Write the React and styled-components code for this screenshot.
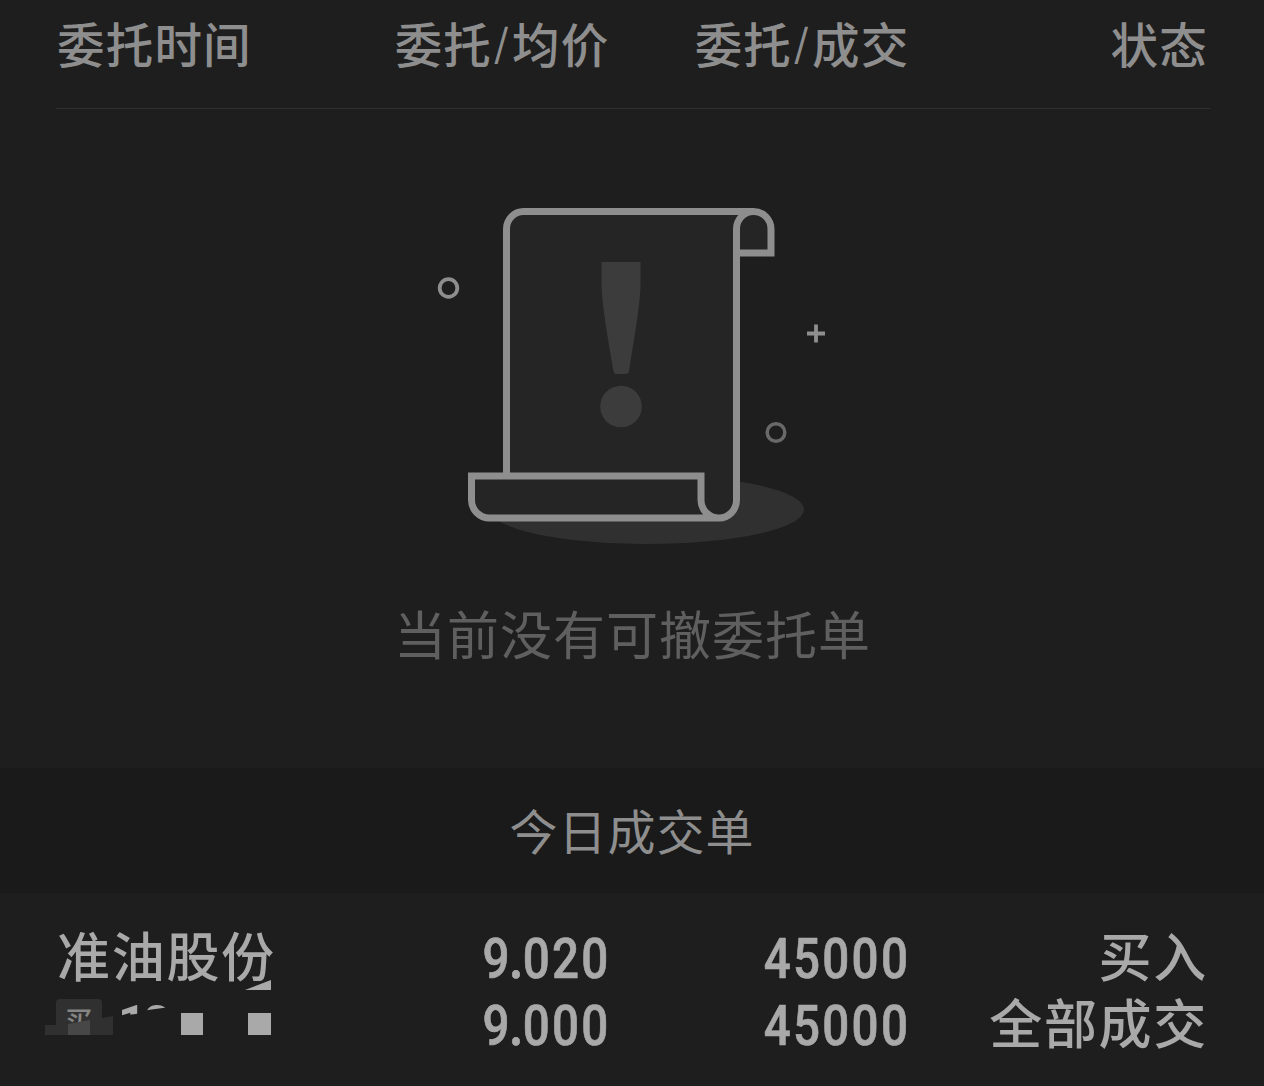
import styled, { createGlobalStyle } from 'styled-components'

const GlobalStyle = createGlobalStyle`
    * {
        box-sizing: border-box;
    }
    body {
        margin: 0;
        background: #1e1e1e;
        font-family: "Noto Sans CJK SC", sans-serif;
    }
`

const Page = styled.main`
    width: 1264px;
    height: 1086px;
    display: flex;
    flex-direction: column;
    background: #1e1e1e;
    overflow: hidden;
`

const Columns = styled.div`
    display: grid;
    grid-template-columns: 252px 300px 300px 300px;
`

const TableHead = styled(Columns)`
    height: 109px;
    margin: 0 54px 0 56px;
    border-bottom: 1px solid #303030;
    color: #8e8e8e;
    font-size: 47.5px;
    font-weight: 500;
    line-height: 86px;
    letter-spacing: 1.2px;
`

const Cell = styled.div`
    white-space: nowrap;
    text-align: ${props => props.$align || 'right'};
    padding-left: ${props => (props.$align ? '1px' : '0')};
    margin-right: ${props => props.$shift || '-1.5px'};
`

const Slash = styled.span`
    padding: 0 2px;
    font-size: 38px;
    line-height: 0;
    vertical-align: 6px;
`

const Empty = styled.section`
    height: 659px;
    padding-top: 81px;
    display: flex;
    flex-direction: column;
    align-items: center;

    svg {
        display: block;
        flex: none;
        margin-left: 6px;
    }

    p {
        margin: 33px 0 0 1px;
        color: #5f5f5f;
        font-size: 52px;
        font-weight: 400;
        line-height: 79px;
        letter-spacing: 1px;
    }
`

const SectionTitle = styled.h2`
    height: 125px;
    margin: 0;
    background: #1a1a1a;
    color: #8e8e8e;
    font-size: 48px;
    font-weight: 400;
    line-height: 123px;
    letter-spacing: 1px;
    text-align: center;
`

const DealRow = styled(Columns)`
    height: 193px;
    padding: 28px 56px 0;
    color: #a9a9a9;
    font-size: 53px;
    font-weight: 500;
    line-height: 67px;
    letter-spacing: 1.7px;
`

const Stack = styled.div`
    display: flex;
    flex-direction: column;
    align-items: ${props => props.$align || 'flex-end'};
    padding-left: ${props => (props.$align ? '1px' : '0')};
    white-space: nowrap;
`

const Figures = styled(Stack)`
    padding-top: 5px;
    margin-right: -2px;
`

const Figure = styled.span`
    font-family: Roboto, sans-serif;
    font-size: 56px;
    line-height: 67px;
    letter-spacing: 2.6px;
    transform: scaleX(0.85);
    transform-origin: right;
    -webkit-text-stroke: 0.7px currentColor;
`

const Point = styled.span`
    font-weight: 700;
    letter-spacing: -0.5px;
    margin-left: -3px;
`

const HiddenTime = styled.svg`
    display: block;
    margin: -10px 0 0 -17px;
    overflow: visible;
`

const EmptyScroll = () => (
    <svg width="420" height="370" viewBox="425 190 420 370" fill="none">
        <ellipse cx="647" cy="509.500" rx="157" ry="34.500" fill="#303030" />
        <path d="M506.500 476V229Q506.500 211.500 523 211.500H753Q771 213 771 230V253H736.500V501Q736.500 518 719 518H489Q472 518 472 500V476Z" fill="#252525" />
        <g stroke="#8e8e8e" strokeWidth="7">
            <path d="M506.500 476V229A17 17.500 0 0 1 523.500 211.500H753.500A17.500 17.500 0 0 1 771 229V253H736.500" />
            <path d="M753.500 211.500A17 17.500 0 0 0 736.500 229V500A17.500 18 0 0 1 719 518H489.500A18 18 0 0 1 471.500 500V476H701V500A18 18 0 0 0 719 518" />
        </g>
        <path d="M601.500 262H640.500V284C640.500 304 633 345 629 372Q628.500 374 626 374H616Q614 374 613.500 371C609 345 601.500 303 601.500 284Z" fill="#3c3c3c" />
        <circle cx="621" cy="406.500" r="20.800" fill="#3c3c3c" />
        <circle cx="448.500" cy="288" r="8.800" stroke="#8e8e8e" strokeWidth="3.800" />
        <circle cx="776" cy="432.500" r="8.800" stroke="#696969" strokeWidth="3.500" />
        <path d="M807 333.500H825M816 324.500V342.500" stroke="#8e8e8e" strokeWidth="3.800" />
    </svg>
)

const MaskedTime = () => (
    <HiddenTime width="240" height="60" viewBox="40 978 240 60">
        <defs>
            <clipPath id="badge-cut">
                <path d="M56 999H102V1021L90 1020L78 1023H56Z" />
            </clipPath>
            <clipPath id="time-cut">
                <path d="M118 1000H170V1007L148 1010L136 1014L118 1016Z" />
            </clipPath>
        </defs>
        <path d="M245 990L271 980V990Z" fill="#a9a9a9" />
        <path d="M45 1025H56V1003Q56 999 60 999H98Q102 999 102 1003V1018L113 1016V1035H45Z" fill="#303030" />
        <text x="64.500" y="1032" fontSize="28" fontWeight="500" letterSpacing="0" fill="#858585" clipPath="url(#badge-cut)">买</text>
        <path d="M68 1024L78 1022L90 1020V1035H68Z" fill="#474747" />
        <text x="118" y="1039" fontFamily="Roboto, sans-serif" fontSize="49" fontWeight="700" letterSpacing="-3" fill="#a9a9a9" clipPath="url(#time-cut)">10</text>
        <rect x="181" y="1013" width="22" height="22" fill="#a9a9a9" />
        <rect x="248" y="1013" width="23" height="22" fill="#a9a9a9" />
    </HiddenTime>
)

export default function App() {
    return (
        <>
            <GlobalStyle />
            <Page>
                <TableHead>
                    <Cell $align="left">委托时间</Cell>
                    <Cell>委托<Slash>/</Slash>均价</Cell>
                    <Cell>委托<Slash>/</Slash>成交</Cell>
                    <Cell $shift="0">状态</Cell>
                </TableHead>

                <Empty>
                    <EmptyScroll />
                    <p>当前没有可撤委托单</p>
                </Empty>

                <SectionTitle>今日成交单</SectionTitle>

                <DealRow>
                    <Stack $align="flex-start">
                        <span>准油股份</span>
                        <MaskedTime />
                    </Stack>
                    <Figures>
                        <Figure>9<Point>.</Point>020</Figure>
                        <Figure>9<Point>.</Point>000</Figure>
                    </Figures>
                    <Figures>
                        <Figure>45000</Figure>
                        <Figure>45000</Figure>
                    </Figures>
                    <Stack>
                        <span>买入</span>
                        <span>全部成交</span>
                    </Stack>
                </DealRow>
            </Page>
        </>
    )
}
